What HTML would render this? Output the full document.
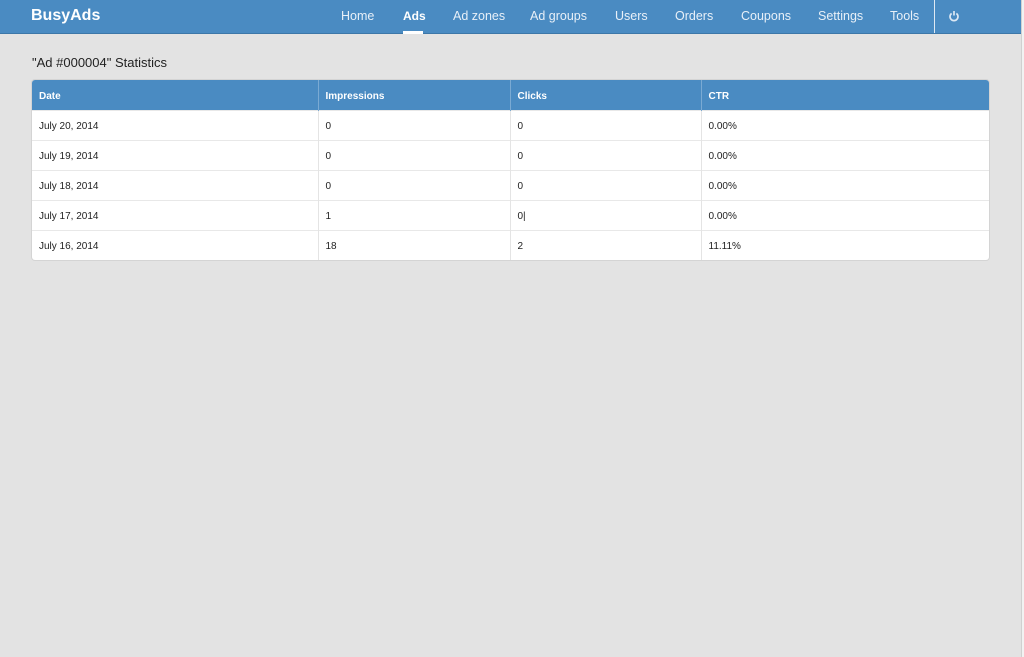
<!DOCTYPE html>
<html><head><style>
*{margin:0;padding:0;box-sizing:border-box}
html,body{width:1024px;height:657px;overflow:hidden;background:#e3e3e3;font-family:"Liberation Sans",sans-serif}
.nav{position:absolute;left:0;top:0;width:1021px;height:34px;background:#4a8bc2;border-bottom:1px solid #3d77a8}
.brand{position:absolute;left:31px;top:7px;color:#fff;font-weight:bold;font-size:16px}
.nav a{position:absolute;top:9px;color:#e8f0f8;font-size:12.5px;text-decoration:none}
.nav a.act{color:#fff;font-weight:bold;font-size:12px}
.ul{position:absolute;left:403px;top:31px;width:20px;height:3px;background:#fff}
.sep{position:absolute;left:934px;top:0;width:1px;height:33px;background:#dfe9f3}
.edge{position:absolute;left:1021px;top:0;width:3px;height:657px;background:#f2f2f2;border-left:1px solid #d0d0d0}
h1{position:absolute;left:32px;top:55px;font-size:13px;font-weight:normal;color:#222}
table{position:absolute;left:32px;top:80px;width:957px;border-collapse:collapse;background:#fff;font-size:10px;color:#222;box-shadow:0 0 0 1px #d4d4d4;border-radius:3px;overflow:hidden}
th{background:#4a8bc2;color:#fff;text-align:left;font-weight:bold;height:30px;padding:3px 0 0 7px;border-left:1px solid #7aaad3}
td{height:30px;padding:2px 0 0 7px;border-left:1px solid #e4e4e4;border-top:1px solid #e8e8e8}
th:first-child,td:first-child{border-left:none}
</style></head><body>
<div class="nav">
<div class="brand">BusyAds</div>
<a style="left:341px">Home</a>
<a class="act" style="left:403px">Ads</a>
<a style="left:453px">Ad zones</a>
<a style="left:530px">Ad groups</a>
<a style="left:615px">Users</a>
<a style="left:675px">Orders</a>
<a style="left:741px">Coupons</a>
<a style="left:818px">Settings</a>
<a style="left:890px">Tools</a>
<div class="ul"></div>
<div class="sep"></div>
<svg style="position:absolute;left:948px;top:10px" width="12" height="12" viewBox="0 0 12 12"><path d="M3.6 3.4A4 4 0 1 0 8.4 3.4" fill="none" stroke="#dce8f4" stroke-width="1.7"/><path d="M6 1v4.5" stroke="#dce8f4" stroke-width="1.7"/></svg>
</div>
<div class="edge"></div>
<h1>"Ad #000004" Statistics</h1>
<table>
<tr><th style="width:286px">Date</th><th style="width:192px">Impressions</th><th style="width:191px">Clicks</th><th>CTR</th></tr>
<tr><td>July 20, 2014</td><td>0</td><td>0</td><td>0.00%</td></tr>
<tr><td>July 19, 2014</td><td>0</td><td>0</td><td>0.00%</td></tr>
<tr><td>July 18, 2014</td><td>0</td><td>0</td><td>0.00%</td></tr>
<tr><td>July 17, 2014</td><td>1</td><td>0|</td><td>0.00%</td></tr>
<tr><td>July 16, 2014</td><td>18</td><td>2</td><td>11.11%</td></tr>
</table>
</body></html>
